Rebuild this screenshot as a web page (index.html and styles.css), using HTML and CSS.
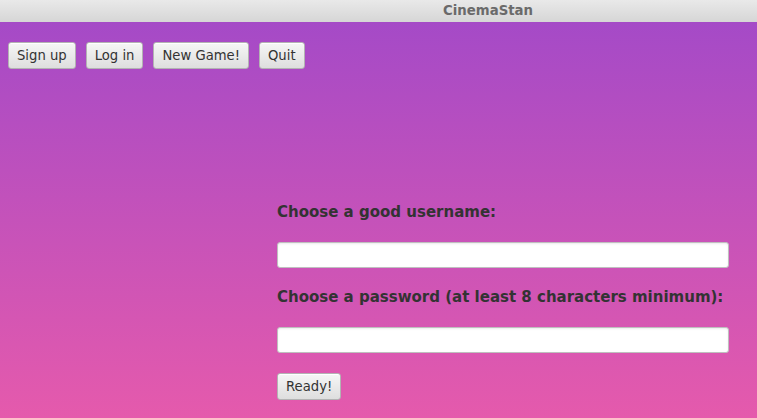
FILE: index.html
```html
<!DOCTYPE html>
<html>
<head>
<meta charset="utf-8">
<link rel="stylesheet" href="styles.css">
</head>
<body>
<div class="window">
  <div class="titlebar"><span class="title">CinemaStan</span></div>
  <div class="content">
    <div class="toolbar">
      <button class="btn">Sign up</button>
      <button class="btn">Log in</button>
      <button class="btn">New Game!</button>
      <button class="btn">Quit</button>
    </div>
    <form class="form">
      <label class="label">Choose a good username:</label>
      <input class="field" type="text">
      <label class="label label-2">Choose a password (at least 8 characters minimum):</label>
      <input class="field" type="password">
      <div class="actions"><button type="button" class="btn">Ready!</button></div>
    </form>
  </div>
</div>
</body>
</html>
```
FILE: styles.css
```css
html, body {
  margin: 0;
  padding: 0;
  width: 757px;
  height: 418px;
  overflow: hidden;
  font-family: "DejaVu Sans", sans-serif;
}
.window {
  display: flex;
  flex-direction: column;
  height: 418px;
}
.titlebar {
  height: 22px;
  flex: none;
  background: linear-gradient(#e9e9e9, #d6d6d6);
  position: relative;
}
.title {
  position: absolute;
  left: 443px;
  top: 3px;
  font-weight: bold;
  font-size: 13.3px;
  line-height: 16px;
  color: #6a6a6a;
}
.content {
  flex: 1;
  background: linear-gradient(#a54ac7, #e55aac);
  display: flex;
  flex-direction: column;
}
.toolbar {
  display: flex;
  gap: 10px;
  padding: 20px 0 0 8px;
}
.btn {
  height: 27px;
  padding: 0 8px;
  font-family: "DejaVu Sans", sans-serif;
  font-size: 13.2px;
  color: #333;
  background: linear-gradient(#f6f6f6, #dedede);
  border: 1px solid #b3b3b3;
  border-radius: 3px;
  box-shadow: inset 0 1px 0 #fff;
}
.form {
  margin: 135px 0 0 277px;
  width: 452px;
  display: flex;
  flex-direction: column;
}
.label {
  font-weight: bold;
  font-size: 15px;
  line-height: 17px;
  color: #333;
  margin-bottom: 21px;
  white-space: nowrap;
}
.label-2 {
  margin-top: 21px;
}
.field {
  box-sizing: border-box;
  height: 26px;
  width: 452px;
  margin: 0;
  background: #fff;
  border: 1px solid #bfbfbf;
  border-radius: 3px;
  box-shadow: inset 0 1px 2px rgba(0,0,0,0.08);
}
.actions {
  margin-top: 20px;
}
```
